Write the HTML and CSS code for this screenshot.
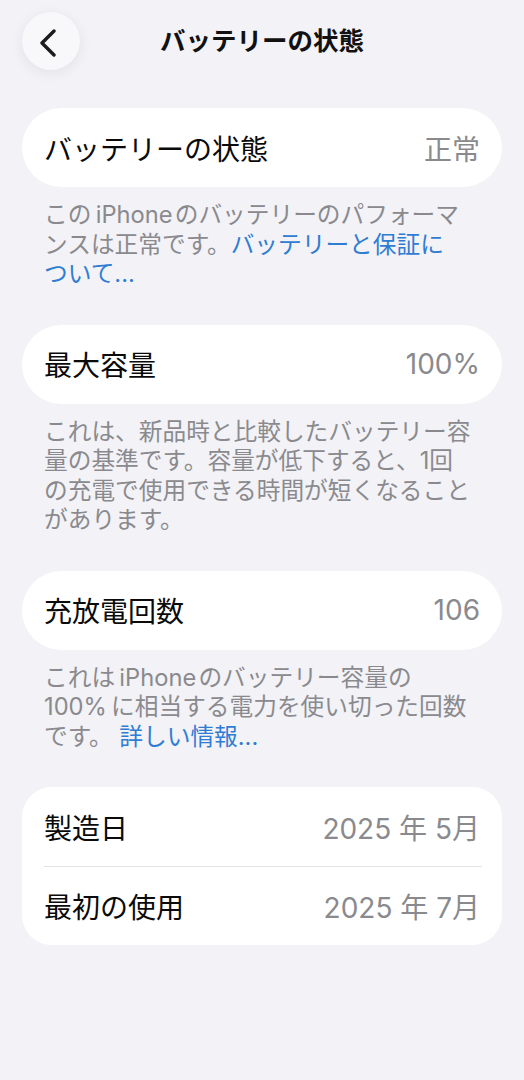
FILE: index.html
```html
<!DOCTYPE html>
<html lang="ja">
<head>
    <meta charset="UTF-8">
    <meta name="viewport" content="width=device-width, initial-scale=1.0">
    <title>バッテリーの状態</title>
    <link rel="stylesheet" href="styles.css">
</head>
<body>
    <header class="nav">
        <button class="back" aria-label="戻る">
            <svg viewBox="0 0 24 24" width="24" height="32">
                <path d="M17 2 L5 14 L17 26" fill="none" stroke="#1c1c1e" stroke-width="3.4" stroke-linecap="round" stroke-linejoin="round"/>
            </svg>
        </button>
        <h1 class="nav-title">バッテリーの状態</h1>
        <span></span>
    </header>

    <main class="list">
        <section class="group">
            <div class="card pill">
                <div class="row">
                    <span class="label">バッテリーの状態</span>
                    <span class="value">正常</span>
                </div>
            </div>
            <p class="note">この&thinsp;iPhone&hairsp;のバッテリーのパフォーマ<br>ンスは正常です。<a href="#">バッテリーと保証に<br>ついて...</a></p>
        </section>

        <section class="group">
            <div class="card pill">
                <div class="row">
                    <span class="label">最大容量</span>
                    <span class="value">100%</span>
                </div>
            </div>
            <p class="note">これは、新品時と比較したバッテリー容<br>量の基準です。容量が低下すると、1回<br>の充電で使用できる時間が短くなること<br>があります。</p>
        </section>

        <section class="group">
            <div class="card pill">
                <div class="row">
                    <span class="label">充放電回数</span>
                    <span class="value">106</span>
                </div>
            </div>
            <p class="note">これは&thinsp;iPhone&hairsp;のバッテリー容量の<br>100%&thinsp;に相当する電力を使い切った回数<br>です。 <a href="#">詳しい情報...</a></p>
        </section>

        <section class="group">
            <div class="card">
                <div class="row">
                    <span class="label">製造日</span>
                    <span class="value">2025 年 5月</span>
                </div>
                <div class="row">
                    <span class="label">最初の使用</span>
                    <span class="value">2025 年 7月</span>
                </div>
            </div>
        </section>
    </main>
</body>
</html>
```

FILE: styles.css
```css
:root{
    --bg : #f2f2f7;
    --card : #fff;
    --label : #0a0a0a;
    --muted : #8a8a8e;
    --link : #2f7dd3;
    --divider : #e3e3e6;
}

*{
    padding: 0;
    margin: 0;
    box-sizing: border-box;
}

a{
    text-decoration: none;
    color: var(--link);
}

body{
    background: var(--bg);
    font-family: "Inter", "Noto Sans CJK JP", sans-serif;
    color: var(--label);
}

.nav{
    display: grid;
    grid-template-columns: 58px 1fr 58px;
    align-items: center;
    padding: 12px 22px 0;
}

.back{
    width: 58px;
    height: 58px;
    border: none;
    border-radius: 50%;
    background: #f8f8fa;
    box-shadow: 0 3px 14px rgba(0, 0, 0, 0.07);
    display: flex;
    align-items: center;
    justify-content: center;
    padding-right: 4px;
}

.nav-title{
    text-align: center;
    font-size: 25.5px;
    font-weight: 700;
    line-height: 58px;
    color: #111;
}

.list{
    padding: 38px 22px 0;
}

.group{
    margin-bottom: 36px;
}

.card{
    background: var(--card);
    border-radius: 30px;
    padding: 0 20px 0 22px;
}

.card.pill{
    border-radius: 40px;
}

.row{
    display: flex;
    justify-content: space-between;
    align-items: center;
    height: 79px;
    font-size: 28px;
}

.row + .row{
    border-top: 1px solid var(--divider);
}

.label{
    color: var(--label);
}

.value{
    color: var(--muted);
    padding-right: 2px;
}

.note{
    margin-top: 13px;
    padding: 0 10px 0 22px;
    font-size: 23.7px;
    line-height: 29.5px;
    color: var(--muted);
    white-space: nowrap;
}
```
